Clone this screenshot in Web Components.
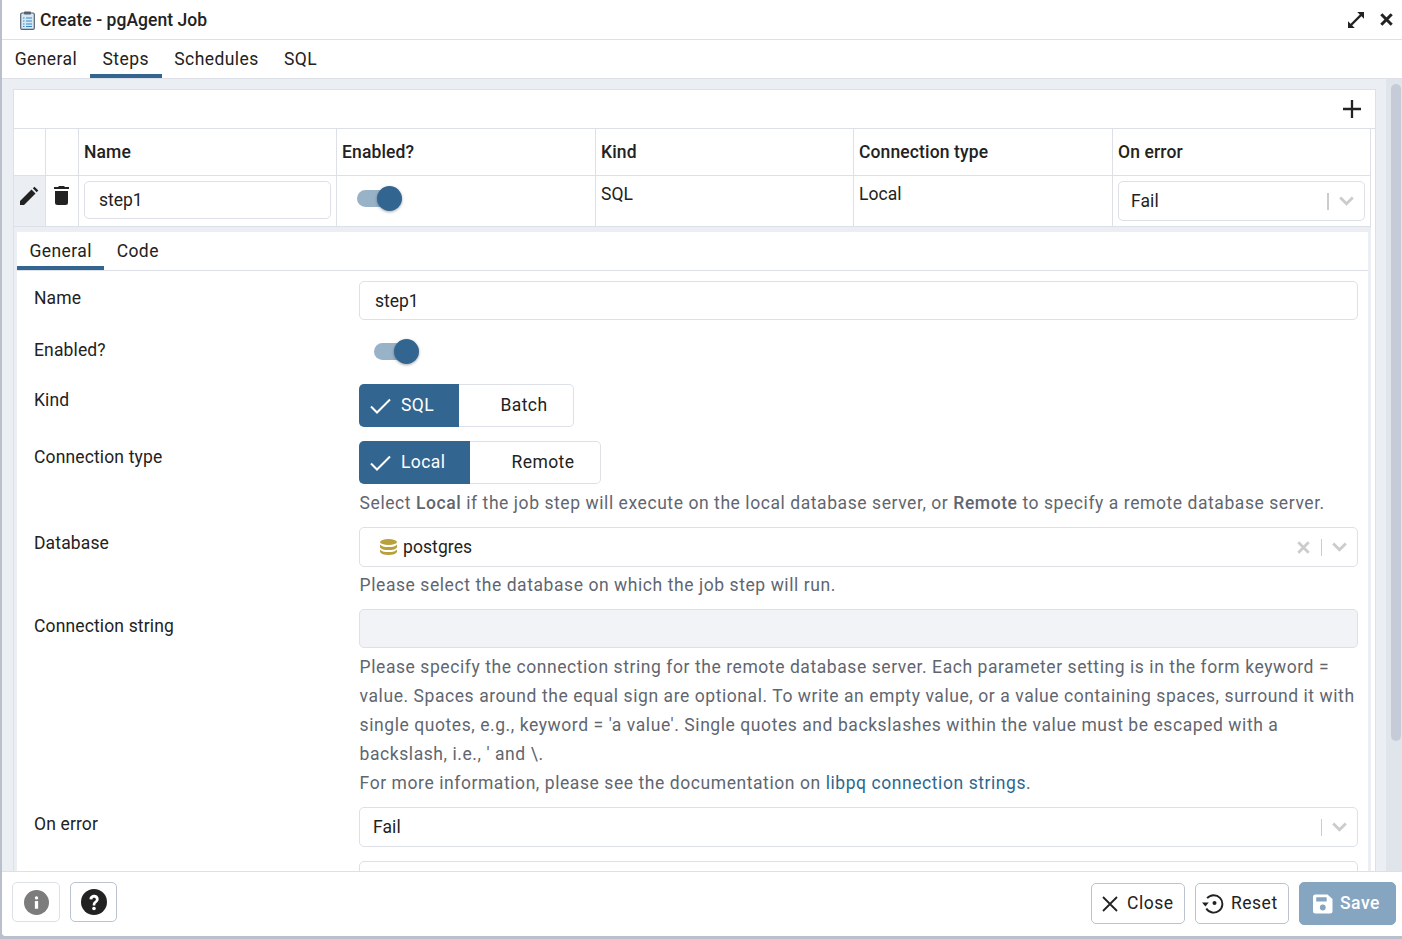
<!DOCTYPE html>
<html><head><meta charset="utf-8"><style>
html,body{margin:0;padding:0;height:939px;overflow:hidden;background:#b9c0cc}
body{font-family:Roboto,"Liberation Sans",sans-serif;font-size:17.5px;color:#222}
</style></head><body>
<pg-dialog></pg-dialog>
<template id="t-dialog"><style>
:host{display:flex;flex-direction:column;width:1400px;height:936px;margin-left:2px;background:#fff;box-sizing:border-box;overflow:hidden;position:relative;border-bottom-left-radius:4px}
.head{height:40px;box-sizing:border-box;flex:none;display:flex;align-items:center;padding:0 9px 0 18px;border-bottom:1px solid #dde0e6;background:#fff}
.head .t{font-weight:500;font-size:17.5px;margin-left:5px;flex:1;color:#222;letter-spacing:.05px}
.head svg{display:block}
.tabs{height:39px;flex:none;border-bottom:1px solid #dde0e6;--tp:12.700px}
.body{flex:1;min-height:0;background:#ebeef3;overflow:hidden;padding:10px 26px 0 11px;position:relative;display:flex;box-sizing:border-box}
.card{flex:1;min-width:0;background:#fff;border:1px solid #dde0e6;border-bottom:0;display:flex;flex-direction:column;overflow:hidden;box-sizing:border-box}
.bar{height:39px;box-sizing:border-box;flex:none;display:flex;justify-content:flex-end;align-items:center;padding:0 13px;border-bottom:1px solid #dde0e6}
.wrap{flex:1;min-height:0;width:1357px;background:#ebeef3;padding:0 3px;box-sizing:border-box;display:flex;flex-direction:column;overflow:hidden}
.thumb{position:absolute;right:1px;top:5px;width:10px;height:657px;background:#c5ccd8;border-radius:5px}
.track{position:absolute;right:0;top:0;bottom:0;width:16px;background:#e0e4eb}
.foot{height:65px;flex:none;border-top:1px solid #dde0e6;display:flex;align-items:center;padding:0 6px 1px 10px;gap:10px;background:#fff;box-sizing:border-box}
.sp{flex:1}
.up{margin-bottom:3px}
</style>
<div class="head"><svg width="15" height="19" viewBox="0 0 15 19" style="margin-top:1px"><rect x=".7" y="2" width="13.600" height="16.300" rx="1.300" fill="#d5e8f6" stroke="#56616d" stroke-width="1.200"/><rect x="4" y=".4" width="7" height="3.200" rx=".8" fill="#56616d"/><path d="M3 7h1.500M6 7h6M3 10h1.500M6 10h6M3 13h1.500M6 13h6M3 15.500h1.500M6 15.500h6" stroke="#3b86c4" stroke-width="1.100"/></svg><span class="t">Create - pgAgent Job</span>
<svg width="16" height="16" viewBox="0 0 16 16" style="margin-right:16px"><path d="M3 13L13 3" stroke="#222" stroke-width="2.400"/><path d="M9.200 0H16V6.800zM0 9.200V16H6.800z" fill="#222"/></svg>
<svg width="13" height="13" viewBox="0 0 13 13"><path d="M1.300 1.300l10.400 10.400M11.700 1.300L1.300 11.700" stroke="#222" stroke-width="3"/></svg></div>
<pg-tabs class="tabs" items="General,Steps,Schedules,SQL" active="1"></pg-tabs>
<div class="body"><div class="track"></div><div class="thumb"></div>
<div class="card"><div class="bar"><svg width="20" height="20" viewBox="0 0 20 20"><path d="M10 1v18M1 10h18" stroke="#222" stroke-width="2.300"/></svg></div>
<step-table></step-table>
<div class="wrap"><step-form></step-form></div>
</div></div>
<div class="foot">
<pg-btn square class="up" style="width:48px"><svg width="25" height="25" viewBox="0 0 26 26"><circle cx="13" cy="13" r="13" fill="#7c7c7c"/><rect x="11.300" y="11.500" width="3.400" height="8" fill="#fff"/><rect x="11.300" y="6.500" width="3.400" height="3.300" rx="1.600" fill="#fff"/></svg></pg-btn>
<pg-btn square strong class="up"><svg width="26" height="26" viewBox="0 0 26 26"><circle cx="13" cy="13" r="13" fill="#222"/><path d="M8.500 10.300c0-6 9.200-6 9.200-.2 0 3.600-3.400 3.300-3.400 6.300h-2.600c0-4.300 3.200-4.100 3.200-6.100 0-2.200-3.600-2.200-3.600.2z" fill="#fff"/><circle cx="13" cy="19.500" r="1.800" fill="#fff"/></svg></pg-btn>
<span class="sp"></span>
<pg-btn strong label="Close" style="width:94px;height:41px;padding:0 0 0 10px;gap:9px;justify-content:flex-start"><svg width="16" height="16" viewBox="0 0 16 16"><path d="M1 1l14 14M15 1L1 15" stroke="#222" stroke-width="1.800"/></svg></pg-btn>
<pg-btn strong label="Reset" style="width:94px;height:41px;padding:0 0 0 6px;gap:7px;justify-content:flex-start"><svg width="22" height="22" viewBox="0 0 22 22" style="margin-bottom:2px"><path d="M5.100 6.200A8.700 8.700 0 1 1 4.300 16.500" fill="none" stroke="#222" stroke-width="1.900"/><path d="M0 10.500h6.800l-3.400 4z" fill="#222"/><circle cx="12.500" cy="11" r="2" fill="#222"/></svg></pg-btn>
<pg-btn primary label="Save" style="width:97px"><svg width="20" height="20" viewBox="0 0 20 20"><path d="M2.500 .5h12L19.500 5v12a2.500 2.500 0 0 1-2.500 2.500H2.500A2.500 2.500 0 0 1 0 17V3A2.500 2.500 0 0 1 2.500 .5z" fill="#fff"/><rect x="3.200" y="3.200" width="10.500" height="4.300" rx=".6" fill="#86a5c0"/><circle cx="9.800" cy="13.500" r="2.900" fill="#86a5c0"/></svg></pg-btn>
</div></template>

<template id="t-tabs"><style>
:host{display:flex;box-sizing:border-box}
.tab{height:100%;padding:4px var(--tp,12.400px) 0;display:flex;align-items:center;box-sizing:border-box;color:#222;border-bottom:4px solid transparent;letter-spacing:.42px}
.tab.on{border-bottom-color:#326690}
</style><div id="r" style="display:contents"></div></template>

<template id="t-btn"><style>
:host{display:inline-flex;align-items:center;justify-content:center;box-sizing:border-box;height:40px;padding:0 11px;gap:8px;border:1px solid #dde0e6;border-radius:5px;background:#fff;color:#222;font-size:17.5px;letter-spacing:.5px;flex:none}
:host([square]){width:47px;padding:0}
:host([strong]){border-color:#bcc3d0}
:host([primary]){background:#86a5c0;border-color:#86a5c0;color:#fff;height:43px;font-weight:500;padding:0 0 0 13px;gap:7px;justify-content:flex-start}
::slotted(svg){display:block}
#l{margin-bottom:2px}
</style><slot></slot><span id="l"></span></template>

<template id="t-toggle"><style>
:host{display:inline-block;width:45px;height:25px;position:relative}
.tr{position:absolute;left:0;top:4px;width:40px;height:17px;border-radius:9px;background:#98b2c8}
.kn{position:absolute;right:0;top:0;width:25px;height:25px;border-radius:50%;background:#326690;box-shadow:0 1px 3px rgba(0,0,0,.35)}
</style><div class="tr"></div><div class="kn"></div></template>

<template id="t-select"><style>
:host{display:flex;align-items:center;box-sizing:border-box;border:1px solid #dde0e6;border-radius:5px;background:#fff;height:40px;color:#222;padding-left:var(--pl,13px)}
.v{flex:1;display:flex;align-items:center;gap:6px;letter-spacing:.08px}
.x,.sep,.chev{flex:none}
.sep{width:var(--sw,1px);height:17px;background:#ccc;margin:0 10px 0 11px}
svg{display:block}
::slotted(svg){display:block}
</style><div class="v"><slot></slot></div>
<svg class="x" id="x" width="13" height="13" viewBox="0 0 13 13"><path d="M1.300 1.300l10.400 10.400M11.700 1.300L1.300 11.700" stroke="#ccc" stroke-width="2.800"/></svg>
<div class="sep"></div>
<svg class="chev" width="15" height="10" viewBox="0 0 15 10" style="margin-right:10px"><path d="M1.200 1.500L7.500 7.800l6.300-6.300" fill="none" stroke="#ccc" stroke-width="2.800"/></svg></template>

<template id="t-input"><style>
:host{display:flex;align-items:center;box-sizing:border-box;border:1px solid #dde0e6;border-radius:5px;background:#fff;height:39px;padding:var(--pt,1px) 0 0 var(--pl,15px);color:#222}
:host([disabled]){background:#f2f3f7}
</style><slot></slot></template>

<template id="t-seg"><style>
:host{display:inline-flex;box-sizing:border-box;height:43px;letter-spacing:.4px;vertical-align:top}
.on{background:#326690;color:#fff;display:flex;align-items:center;border-radius:5px 0 0 5px;padding:0 0 1px 11px;gap:10px;box-sizing:border-box}
.off{display:flex;align-items:center;justify-content:center;color:#222;box-sizing:border-box;padding:0 0 1px 16px;border:1px solid #dde0e6;border-left:0;border-radius:0 5px 5px 0;background:#fff}
svg{display:block;margin-top:1px}
</style><div class="on" id="a"><svg width="21" height="16" viewBox="0 0 21 16"><path d="M1 8.500l6 6L20 1.500" fill="none" stroke="#fff" stroke-width="2"/></svg><span id="at"></span></div><div class="off" id="b"></div></template>

<template id="t-table"><style>
:host{display:block;flex:none}
.g{display:grid;grid-template-columns:32px 33px 258px 259px 258px 259px 258px;width:1357px}
.c{box-sizing:border-box;border-right:1px solid #dde0e6;border-bottom:1px solid #dde0e6}
.h{height:47px;font-weight:500;display:flex;align-items:center;padding:0 5px;letter-spacing:.13px}
.r{height:51px;padding:0 5px}
.p{background:#ebeef3;display:flex;justify-content:center;padding:10px 2px 0 0}
.d{display:flex;justify-content:center;padding:10px 2px 0 0}
.txt{padding-top:8px;letter-spacing:.05px}
pg-input{height:38px;margin-top:5px;--pl:14px;--pt:0px}
pg-select{height:40px;margin-top:5px;--pl:12px;--sw:2px}
pg-toggle{margin:10px 0 0 15px}
.gap{height:5px;background:#ebeef3;width:1357px}
svg{display:block}
</style><div class="g">
<div class="c h"></div><div class="c h"></div><div class="c h">Name</div><div class="c h">Enabled?</div><div class="c h">Kind</div><div class="c h">Connection type</div><div class="c h">On error</div>
<div class="c r p"><svg width="20" height="20" viewBox="0 0 20 20"><path d="M1 19v-4L12.500 3.500l4 4L5 19zM13.800 2.200l1.700-1.500 3.800 3.800-1.600 1.700z" fill="#222"/></svg></div>
<div class="c r d"><svg width="15" height="19" viewBox="0 0 15 19"><path d="M5 0h5l1 1h4v2H0V1h4zM1 5h13v11.500a2.500 2.500 0 0 1-2.500 2.500h-8A2.500 2.500 0 0 1 1 16.500z" fill="#222"/></svg></div>
<div class="c r"><pg-input>step1</pg-input></div>
<div class="c r"><pg-toggle></pg-toggle></div>
<div class="c r txt">SQL</div><div class="c r txt">Local</div>
<div class="c r"><pg-select>Fail</pg-select></div>
</div><div class="gap"></div></template>

<template id="t-form"><style>
:host{display:block;flex:1;min-height:0;background:#fff;overflow:hidden}
.tabs{height:39px;border-bottom:1px solid #dde0e6}
.f{display:grid;grid-template-columns:342px 999px;grid-auto-rows:min-content}
.f>div{box-sizing:border-box}
.l{color:#222;padding-left:17px;letter-spacing:.14px;line-height:20px}
.hp{color:#5f6670;line-height:29px;letter-spacing:.57px;padding-left:.6px}
.hp b{font-weight:500}
.hp a{color:#2c678f;text-decoration:none}
</style>
<pg-tabs class="tabs" items="General,Code" active="0"></pg-tabs>
<div class="f">
<div class="l" style="height:57px;padding-top:17px">Name</div><div style="padding-top:10px;height:57px"><pg-input>step1</pg-input></div>
<div class="l" style="height:56px;padding-top:12px">Enabled?</div><div style="padding:11px 0 0 15px;height:56px"><pg-toggle></pg-toggle></div>
<div class="l" style="height:57px;padding-top:6px">Kind</div><div style="height:57px"><pg-seg a="SQL" b="Batch" aw="100" bw="115"></pg-seg></div>
<div class="l" style="height:86px;padding-top:6px">Connection type</div><div style="height:86px"><pg-seg a="Local" b="Remote" aw="111" bw="131"></pg-seg>
<div class="hp" style="margin-top:5px">Select <b>Local</b> if the job step will execute on the local database server, or <b>Remote</b> to specify a remote database server.</div></div>
<div class="l" style="height:82px;padding-top:6px">Database</div><div style="height:82px"><pg-select style="--pl:20px" clear><svg width="17" height="16" viewBox="0 0 17 16"><ellipse cx="8.500" cy="3" rx="8.500" ry="3" fill="#b8a13c"/><path d="M0 5.500c1 1.700 4 2.600 8.500 2.600s7.500-.9 8.500-2.600v3c-1 1.700-4 2.600-8.500 2.600S1 10.200 0 8.500zM0 10.500c1 1.700 4 2.600 8.500 2.600s7.500-.9 8.500-2.600V13c-1 1.800-4 3-8.500 3S1 14.800 0 13z" fill="#b8a13c"/></svg>postgres</pg-select>
<div class="hp" style="margin-top:4px">Please select the database on which the job step will run.</div></div>
<div class="l" style="height:198px;padding-top:7px">Connection string</div><div style="height:198px"><pg-input disabled></pg-input>
<div class="hp" style="margin-top:5px">Please specify the connection string for the remote database server. Each parameter setting is in the form keyword = value. Spaces around the equal sign are optional. To write an empty value, or a value containing spaces, surround it with single quotes, e.g., keyword = 'a value'. Single quotes and backslashes within the value must be escaped with a backslash, i.e., ' and \.<br>For more information, please see the documentation on <a>libpq connection strings</a>.</div></div>
<div class="l" style="padding-top:7px;height:54px">On error</div><div style="height:54px"><pg-select>Fail</pg-select></div>
<div class="l" style="padding-top:7px">Comment</div><div><pg-input></pg-input></div>
</div></template>

<script>
function mk(id,h){class C extends HTMLElement{constructor(){super();const s=this.attachShadow({mode:'open'});s.appendChild(document.getElementById(id).content.cloneNode(true));h&&h.call(this,s)}}return C}
customElements.define('pg-tabs',mk('t-tabs',function(s){
 const r=s.getElementById('r'),a=+this.getAttribute('active');
 this.getAttribute('items').split(',').forEach((t,i)=>{const d=document.createElement('div');d.className='tab'+(i==a?' on':'');d.textContent=t;r.appendChild(d)});
}));
customElements.define('pg-btn',mk('t-btn',function(s){const l=s.getElementById('l'),t=this.getAttribute('label');if(t)l.textContent=t;else l.remove()}));
customElements.define('pg-toggle',mk('t-toggle'));
customElements.define('pg-input',mk('t-input'));
customElements.define('pg-select',mk('t-select',function(s){if(!this.hasAttribute('clear'))s.getElementById('x').remove()}));
customElements.define('pg-seg',mk('t-seg',function(s){const g=n=>this.getAttribute(n);s.getElementById('at').textContent=g('a');s.getElementById('b').textContent=g('b');s.getElementById('a').style.width=g('aw')+'px';s.getElementById('b').style.width=g('bw')+'px'}));
customElements.define('step-table',mk('t-table'));
customElements.define('step-form',mk('t-form'));
customElements.define('pg-dialog',mk('t-dialog'));
</script></body></html>
